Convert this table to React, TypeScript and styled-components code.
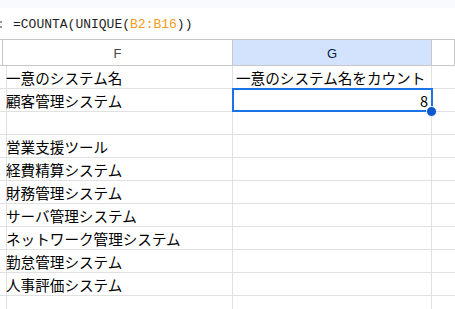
import React from 'react'
import styled, { createGlobalStyle } from 'styled-components'

const GlobalStyle = createGlobalStyle`
  html, body {
    margin: 0;
    padding: 0;
    background: #ffffff;
    overflow: hidden;
  }
  body {
    font-family: "Noto Sans CJK JP", "Liberation Sans", sans-serif;
  }
`

const rows: { f: string; g?: string; selected?: boolean }[] = [
  { f: '一意のシステム名', g: '一意のシステム名をカウント' },
  { f: '顧客管理システム', g: '8', selected: true },
  { f: '' },
  { f: '営業支援ツール' },
  { f: '経費精算システム' },
  { f: '財務管理システム' },
  { f: 'サーバ管理システム' },
  { f: 'ネットワーク管理システム' },
  { f: '勤怠管理システム' },
  { f: '人事評価システム' },
  { f: '' },
]

export default function App() {
  return (
    <Page>
      <GlobalStyle />
      <TopStrip />
      <FormulaBar>
        <Grip>
          <i />
          <i />
        </Grip>
        <Formula>
          =COUNTA(UNIQUE(<Ref>B2:B16</Ref>))
        </Formula>
      </FormulaBar>
      <Sheet>
        <HeaderCell />
        <HeaderCell>F</HeaderCell>
        <HeaderCell $active>G</HeaderCell>
        <HeaderCell />
        {rows.map((r, i) => (
          <React.Fragment key={i}>
            <Cell />
            <Cell>{r.f}</Cell>
            <Cell $numeric={r.g === '8'} $selected={r.selected}>
              {r.g}
              {r.selected && <FillHandle />}
            </Cell>
            <Cell />
          </React.Fragment>
        ))}
      </Sheet>
    </Page>
  )
}

const Page = styled.div`
  width: 455px;
  height: 309px;
  overflow: hidden;
  display: flex;
  flex-direction: column;
`

const TopStrip = styled.div`
  height: 8px;
  background: #f8fafd;
  flex-shrink: 0;
`

const FormulaBar = styled.div`
  height: 31px;
  display: flex;
  align-items: center;
  flex-shrink: 0;
`

const Grip = styled.div`
  width: 13px;
  display: flex;
  flex-direction: column;
  gap: 3px;
  padding-top: 1px;
  > i {
    display: block;
    width: 2px;
    height: 2px;
    border-radius: 1px;
    background: #747775;
  }
`

const Formula = styled.div`
  font-family: "Liberation Mono", "DejaVu Sans Mono", monospace;
  font-size: 13px;
  color: #1f1f1f;
  padding-top: 1px;
`

const Ref = styled.span`
  color: #f29b20;
`

const Sheet = styled.div`
  display: grid;
  grid-template-columns: 3px 230px 199px 1fr;
  grid-template-rows: 26px repeat(11, 23px);
  border-top: 1px solid #c7c7c7;
`

const HeaderCell = styled.div<{ $active?: boolean }>`
  display: flex;
  align-items: center;
  justify-content: center;
  font-family: "Liberation Sans", Arial, sans-serif;
  font-size: 13px;
  color: ${(p) => (p.$active ? '#041e49' : '#444746')};
  background: ${(p) => (p.$active ? '#d3e3fd' : '#ffffff')};
  border-right: 1px solid #c7c7c7;
  border-bottom: 1px solid #c7c7c7;
  &:last-child {
    border-right: none;
  }
  padding-top: 1px;
`

const Cell = styled.div<{ $numeric?: boolean; $selected?: boolean }>`
  position: relative;
  display: flex;
  align-items: center;
  justify-content: ${(p) => (p.$numeric ? 'flex-end' : 'flex-start')};
  padding: 1px 3px 0 3px;
  font-size: 14.6px;
  color: #000000;
  white-space: nowrap;
  border-right: 1px solid #e1e1e1;
  border-bottom: 1px solid #e1e1e1;
  &:nth-child(4n) {
    border-right: none;
  }
  ${(p) =>
    p.$selected &&
    `
    &::after {
      content: '';
      position: absolute;
      top: -1px;
      left: -1px;
      right: -2px;
      bottom: -1px;
      border: 2px solid #1a73e8;
      pointer-events: none;
    }
  `}
`

const FillHandle = styled.span`
  position: absolute;
  right: -6px;
  bottom: -6px;
  width: 9px;
  height: 9px;
  border-radius: 50%;
  background: #0b57d0;
  border: 1px solid #ffffff;
  z-index: 1;
`
